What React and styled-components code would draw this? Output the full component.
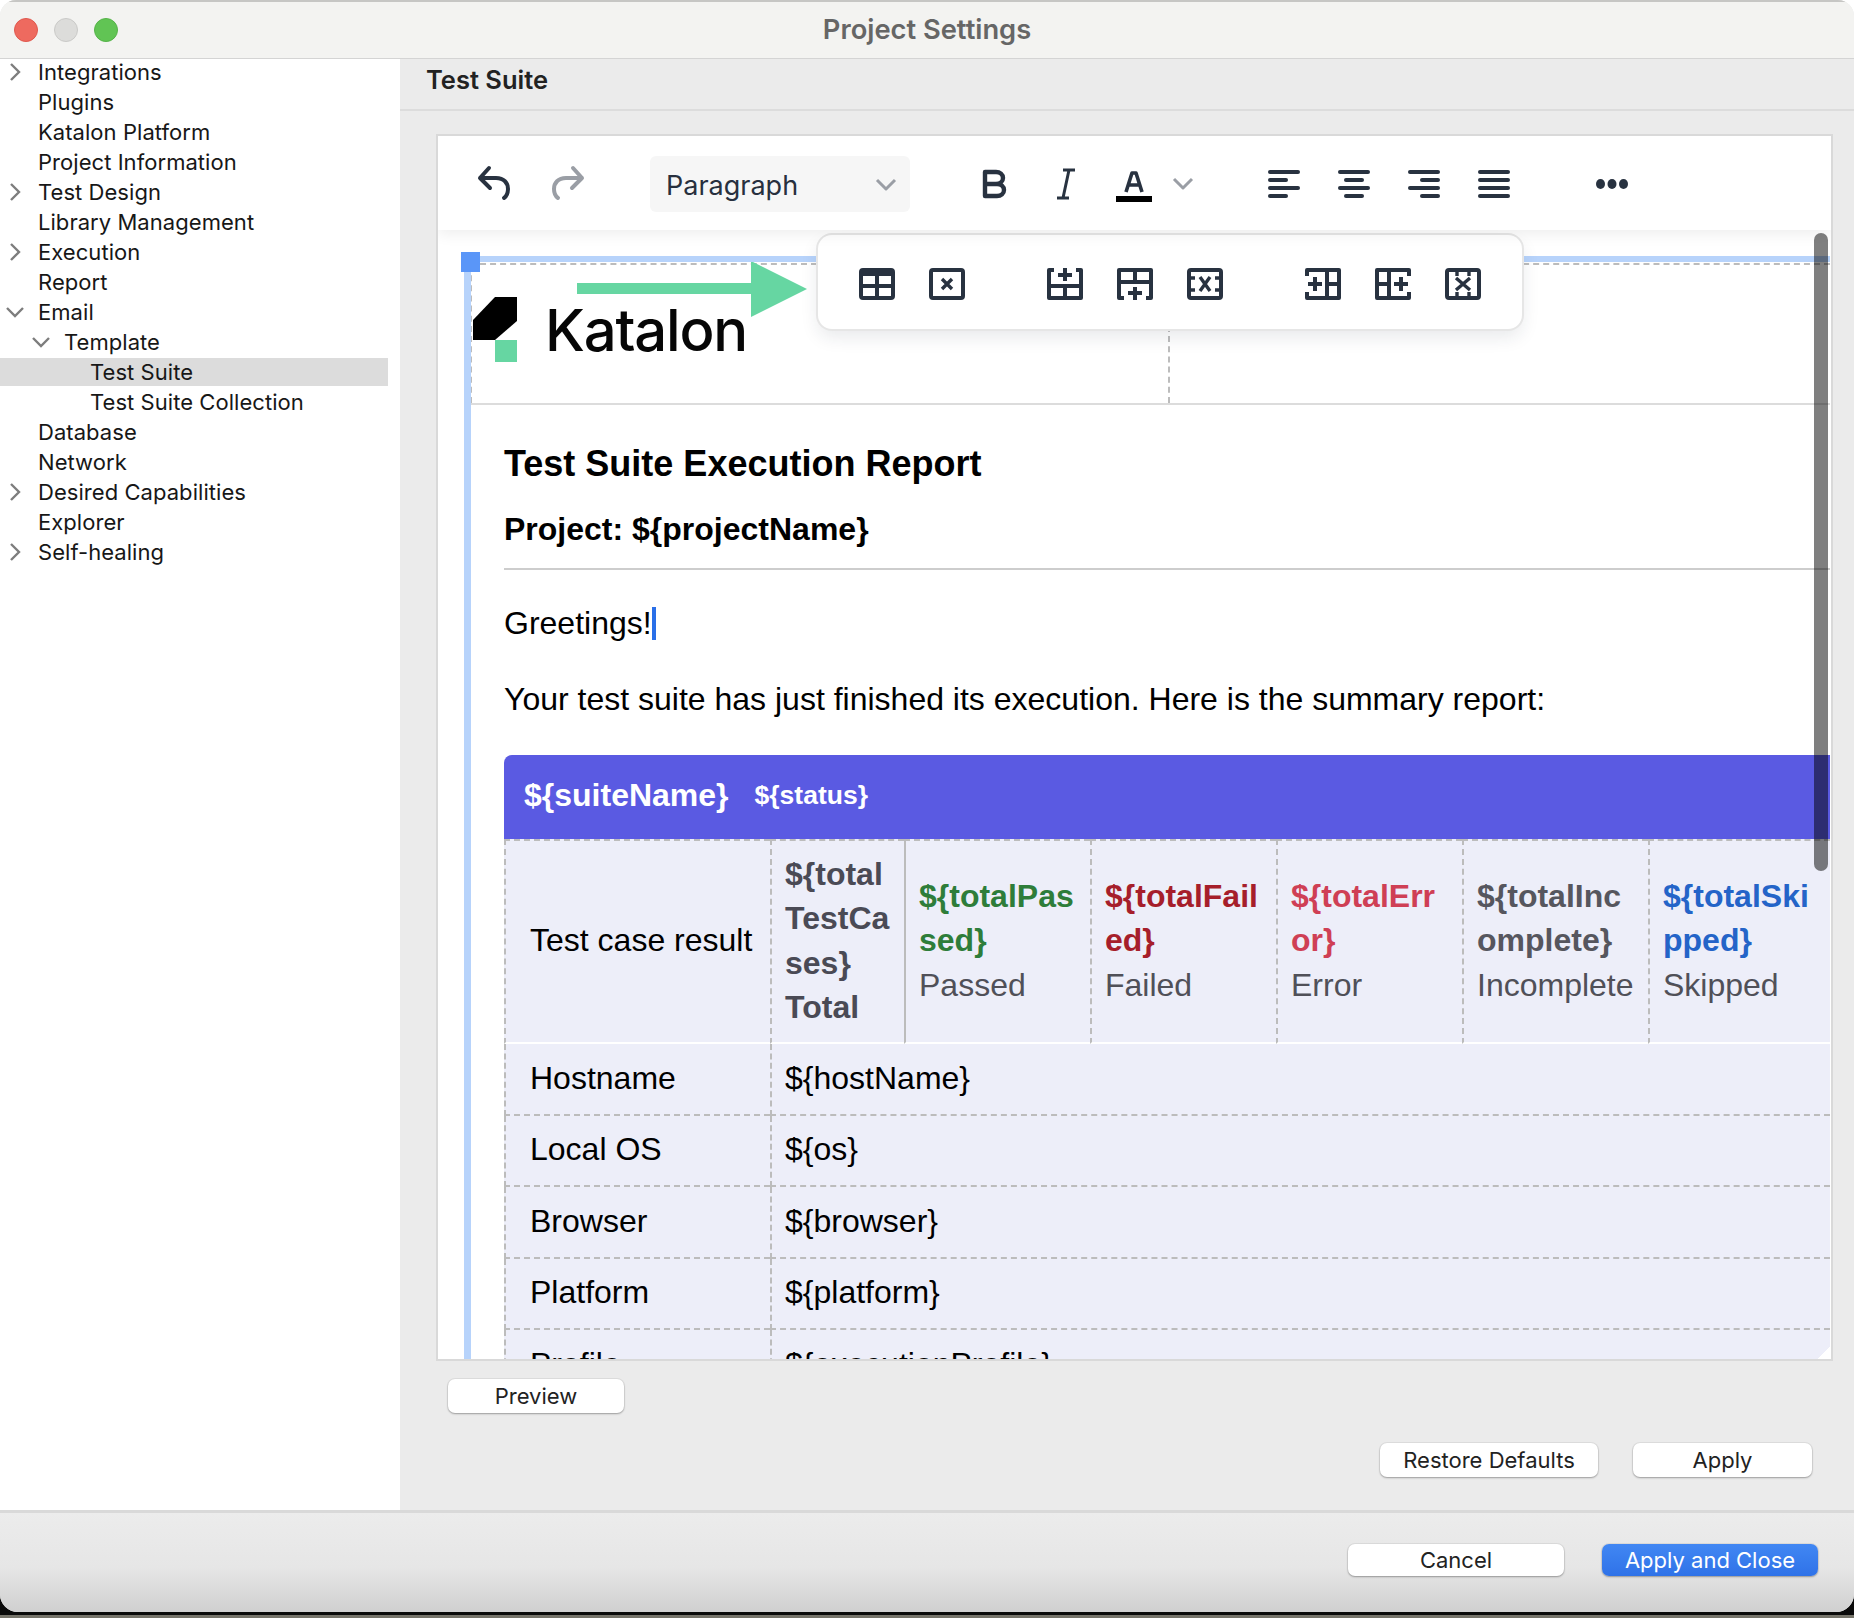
import React from "react";
import styled, { createGlobalStyle } from "styled-components";

const GlobalStyle = createGlobalStyle`
  html, body {
    margin: 0;
    padding: 0;
  }
  #root {
    width: 1854px;
    height: 1618px;
  }
`;

const Page = styled.div`
  width: 1854px;
  height: 1618px;
  overflow: hidden;
  background: linear-gradient(#fff 0, #fff 50%, #0a0a0a 50%, #0a0a0a 1615px, #76746a 1615px);
`;

const Window = styled.div`
  width: 1854px;
  height: 1612px;
  box-sizing: border-box;
  display: flex;
  flex-direction: column;
  overflow: hidden;
  border-radius: 16px 16px 18px 18px;
  background: #ebebeb;
  font-family: Inter, "Liberation Sans", sans-serif;
  color: #1b1b1b;
`;

const TitleBar = styled.div`
  position: relative;
  z-index: 5;
  height: 59px;
  flex: none;
  box-sizing: border-box;
  display: flex;
  align-items: center;
  justify-content: center;
  background: #f3f3f1;
  border-top: 2px solid #c6c6c4;
  border-bottom: 1px solid #d4d4d4;
`;

const Lights = styled.div`
  position: absolute;
  left: 14px;
  top: 16px;
  display: flex;
  gap: 16px;
`;

const Light = styled.span`
  width: 24px;
  height: 24px;
  box-sizing: border-box;
  border-radius: 50%;
  background: ${(p) => p.$color};
  border: 1px solid ${(p) => p.$edge};
`;

const Title = styled.div`
  margin-bottom: 1px;
  font-size: 27.3px;
  font-weight: 600;
  color: #666;
`;

const Body = styled.div`
  flex: 1;
  display: flex;
  min-height: 0;
`;

const Sidebar = styled.div`
  width: 400px;
  flex: none;
  margin-top: -1px;
  padding-right: 12px;
  box-sizing: border-box;
  background: #fff;
  display: flex;
  flex-direction: column;
  gap: 2px;
`;

const TreeRow = styled.div`
  height: 28px;
  flex: none;
  position: relative;
  display: flex;
  align-items: center;
  padding-left: ${(p) => 38 + p.$level * 26}px;
  background: ${(p) => (p.$selected ? "#dcdcdc" : "transparent")};
  font-size: 22px;
  letter-spacing: 0.05px;
  color: #171717;
`;

const Twisty = styled.svg`
  position: absolute;
  left: ${(p) => 5 + p.$level * 26}px;
  top: 4px;
  width: 20px;
  height: 20px;
  fill: none;
  stroke: #7d7d7d;
  stroke-width: 2.4;
`;

const Panel = styled.div`
  flex: 1;
  min-width: 0;
  display: flex;
  flex-direction: column;
`;

const PanelHeader = styled.div`
  height: 52px;
  flex: none;
  box-sizing: border-box;
  padding: 0 0 9px 26px;
  display: flex;
  align-items: center;
  border-bottom: 2px solid #dcdcdc;
  font-size: 25.5px;
  font-weight: 600;
  color: #222;
`;

const EditorBox = styled.div`
  height: 1227px;
  margin: 23px 21px 0 36px;
  box-sizing: border-box;
  border: 2px solid #d9d9d9;
  background: #fff;
  display: flex;
  flex-direction: column;
  overflow: hidden;
`;

const Toolbar = styled.div`
  position: relative;
  z-index: 3;
  height: 94px;
  flex: none;
  display: flex;
  align-items: center;
  padding-top: 2px;
  box-sizing: border-box;
  background: #fff;
  box-shadow: 0 4px 14px rgba(0, 0, 0, 0.07);
`;

const ToolGroup = styled.div`
  display: flex;
  align-items: center;
  gap: ${(p) => p.$gap}px;
  margin-left: ${(p) => p.$left}px;
  margin-bottom: ${(p) => p.$lift || 0}px;
`;

const Icon = styled.svg`
  display: block;
  flex: none;
  fill: none;
  stroke: ${(p) => p.$color || "#283240"};
  stroke-width: ${(p) => p.$weight ?? 4};
  stroke-linecap: ${(p) => p.$cap || "round"};
  stroke-linejoin: round;
  overflow: visible;
`;

const Select = styled.div`
  width: 260px;
  height: 56px;
  box-sizing: border-box;
  padding: 2px 14px 0 16px;
  border-radius: 6px;
  background: #f6f6f6;
  display: flex;
  align-items: center;
  justify-content: space-between;
  font-size: 27px;
  color: #28303e;
`;

const ColorMark = styled.div`
  width: 36px;
  margin-top: 5px;
  display: flex;
  flex-direction: column;
  align-items: center;
  gap: 4px;
  &::after {
    content: "";
    width: 36px;
    height: 6px;
    background: #000;
  }
`;

const EditorArea = styled.div`
  position: relative;
  flex: 1;
  min-height: 0;
  overflow: hidden;
  padding: 33px 1px 0 32px;
`;

const SelectTop = styled.div`
  position: absolute;
  left: 32px;
  right: 1px;
  top: 26px;
  height: 6px;
  background: #b7d3fb;
`;

const SelectLeft = styled.div`
  position: absolute;
  left: 26px;
  top: 26px;
  bottom: 0;
  width: 7px;
  background: #b7d3fb;
`;

const SelectHandle = styled.div`
  position: absolute;
  left: 23px;
  top: 22px;
  width: 19px;
  height: 20px;
  background: #5a96f8;
`;

const LogoRow = styled.div`
  height: 142px;
  box-sizing: border-box;
  display: grid;
  grid-template-columns: 700px 1fr;
  border-top: 2px dashed #bcbcbc;
  border-bottom: 2px solid #dcdcdc;
`;

const LogoCell = styled.div`
  box-sizing: border-box;
  position: relative;
  display: flex;
  align-items: flex-start;
  border-left: 2px dashed #bcbcbc;
  border-right: 2px dashed #bcbcbc;
  padding: 32px 0 0 1px;
`;

const LogoText = styled.div`
  margin: 0 0 0 28px;
  font-size: 58px;
  line-height: 66px;
  font-weight: 500;
  letter-spacing: -1.2px;
  color: #060606;
`;

const Arrow = styled.svg`
  position: absolute;
  left: 105px;
  top: -4px;
  width: 232px;
  height: 56px;
`;

const TableBar = styled.div`
  position: absolute;
  z-index: 2;
  left: 380px;
  top: 5px;
  width: 704px;
  height: 94px;
  box-sizing: border-box;
  padding: 4px 0 0 41px;
  display: flex;
  align-items: center;
  background: #fff;
  border-radius: 14px;
  box-shadow: 0 0 0 2px #e6e6e6, 0 8px 18px rgba(30, 40, 60, 0.1);
`;

const BarGroup = styled.div`
  display: flex;
  gap: 34px;
  margin-right: ${(p) => p.$after}px;
`;

const Content = styled.div`
  padding-left: 34px;
  font-family: "Liberation Sans", Arial, sans-serif;
  color: #000;
`;

const Heading = styled.h1`
  margin: 0;
  padding-top: 38px;
  font-size: 36px;
  line-height: 42px;
  font-weight: 700;
`;

const SubHeading = styled.h2`
  margin: 0;
  padding: 25px 0 20px;
  font-size: 32px;
  line-height: 38px;
  font-weight: 700;
  border-bottom: 2px solid #cdcdcd;
`;

const Para = styled.p`
  margin: 0;
  padding-top: ${(p) => p.$top}px;
  font-size: 32px;
  line-height: 40px;
`;

const Caret = styled.span`
  display: inline-block;
  width: 4px;
  height: 33px;
  vertical-align: -6px;
  background: #2a6fe8;
`;

const ReportHead = styled.div`
  margin-top: 36px;
  height: 84px;
  box-sizing: border-box;
  padding: 0 0 3px 20px;
  display: flex;
  align-items: center;
  gap: 26px;
  background: #5a5ae2;
  border-radius: 8px 0 0 0;
  color: #fff;
  font-weight: 700;
`;

const SuiteName = styled.span`
  font-size: 32px;
`;

const SuiteStatus = styled.span`
  font-size: 26.5px;
`;

const Table = styled.table`
  width: 100%;
  table-layout: fixed;
  border-collapse: separate;
  border-spacing: 0;
  background: #edeef9;
  font-size: 32px;
  line-height: 44.3px;
`;

const Cell = styled.td`
  height: ${(p) => p.$height}px;
  box-sizing: border-box;
  padding: 0 ${(p) => p.$right ?? 13}px 2px ${(p) => p.$pad}px;
  vertical-align: middle;
  overflow-wrap: anywhere;
  border-left: 2px ${(p) => (p.$solid ? "solid" : "dashed")} #bcbcbc;
  border-top: ${(p) => (p.$top ? "2px dashed #bcbcbc" : "none")};
  border-bottom: ${(p) => (p.$white ? "2px solid #fff" : "2px dashed #bcbcbc")};
  color: ${(p) => p.$color || "#000"};
`;

const Stat = styled.b`
  color: ${(p) => p.$color};
`;

const StatLabel = styled.div`
  color: #505058;
`;

const Scrollbar = styled.div`
  position: absolute;
  z-index: 4;
  right: 3px;
  top: 3px;
  width: 14px;
  height: 638px;
  border-radius: 7px;
  background: rgba(0, 0, 0, 0.5);
`;

const ResizeCorner = styled.div`
  position: absolute;
  z-index: 4;
  right: 1px;
  bottom: 0;
  width: 12px;
  height: 12px;
  background: linear-gradient(135deg, transparent 50%, #fff 50%);
`;

const Preview = styled.div`
  margin: 18px 0 0 48px;
`;

const Actions = styled.div`
  display: flex;
  justify-content: flex-end;
  gap: ${(p) => p.$gap}px;
  padding-right: ${(p) => p.$right}px;
  margin-top: ${(p) => p.$top}px;
`;

const Button = styled.button`
  width: ${(p) => p.$width}px;
  height: ${(p) => p.$height || 34}px;
  padding: 0;
  border: none;
  border-radius: 7px;
  font-family: Inter, "Liberation Sans", sans-serif;
  font-size: 22px;
  color: ${(p) => (p.$primary ? "#fff" : "#222")};
  background: ${(p) => (p.$primary ? "linear-gradient(#4187f3, #2f72e8)" : "#fff")};
  box-shadow: 0 0 0 1px rgba(0, 0, 0, 0.05), 0 1px 2px rgba(0, 0, 0, 0.3);
`;

const Footer = styled.div`
  height: 102px;
  flex: none;
  box-sizing: border-box;
  padding-top: 31px;
  border-top: 3px solid #d9d9d9;
  background: linear-gradient(#ececec 0, #e6e6e6 55%, #d0d0d0 100%);
`;

const tree = [
  { label: "Integrations", level: 0, twisty: "closed" },
  { label: "Plugins", level: 0 },
  { label: "Katalon Platform", level: 0 },
  { label: "Project Information", level: 0 },
  { label: "Test Design", level: 0, twisty: "closed" },
  { label: "Library Management", level: 0 },
  { label: "Execution", level: 0, twisty: "closed" },
  { label: "Report", level: 0 },
  { label: "Email", level: 0, twisty: "open" },
  { label: "Template", level: 1, twisty: "open" },
  { label: "Test Suite", level: 2, selected: true },
  { label: "Test Suite Collection", level: 2 },
  { label: "Database", level: 0 },
  { label: "Network", level: 0 },
  { label: "Desired Capabilities", level: 0, twisty: "closed" },
  { label: "Explorer", level: 0 },
  { label: "Self-healing", level: 0, twisty: "closed" },
];

const stats = [
  { value: "${totalPassed}", label: "Passed", color: "#2e7d3a", solid: true },
  { value: "${totalFailed}", label: "Failed", color: "#a61e2b" },
  { value: "${totalError}", label: "Error", color: "#cf3f55" },
  { value: "${totalIncomplete}", label: "Incomplete", color: "#56565e" },
  { value: "${totalSkipped}", label: "Skipped", color: "#2464c8" },
];

const details = [
  ["Hostname", "${hostName}"],
  ["Local OS", "${os}"],
  ["Browser", "${browser}"],
  ["Platform", "${platform}"],
  ["Profile", "${executionProfile}"],
];

const Chevron = ({ color = "#9a9ea5" }) => (
  <Icon width="20" height="12" viewBox="0 0 20 12" $color={color} $weight={3} $cap="butt">
    <path d="M1 1l9 9 9-9" />
  </Icon>
);

const Bars = ({ rows }) => (
  <Icon width="32" height="28" viewBox="0 0 32 28" $weight={4}>
    {rows.map(([a, b], i) => (
      <path key={i} d={`M${a} ${2 + i * 8}H${b}`} />
    ))}
  </Icon>
);

// table toolbar glyphs, all on a 36x32 grid
const tableIcons = {
  table: (
    <>
      <rect x="2" y="2" width="32" height="28" rx="2" />
      <path d="M2 6h32M18 6v24M2 18h32" />
    </>
  ),
  remove: (
    <>
      <rect x="2" y="2" width="32" height="28" rx="2" />
      <path d="M13 11l10 10M23 11L13 21" strokeWidth="3.4" />
    </>
  ),
  rowAbove: (
    <path d="M7 2H2v28h32V2h-5M2 18h32M18 18v12M18 0v13M11 7h14" />
  ),
  rowBelow: (
    <path d="M7 30H2V2h32v28h-5M2 14h32M18 2v12M18 19v13M11 25h14" />
  ),
  rowRemove: (
    <>
      <rect x="2" y="2" width="32" height="28" rx="2" />
      <path d="M2 10h6M2 22h6M28 10h6M28 22h6M13 9l10 14M23 9L13 23" strokeWidth="3.4" />
    </>
  ),
  colBefore: (
    <path d="M2 8V2h32v28H2v-6M22 2v28M22 16h12M3 16h14M10 9v14" />
  ),
  colAfter: (
    <path d="M34 8V2H2v28h32v-6M14 2v28M2 16h12M19 16h14M26 9v14" />
  ),
  colRemove: (
    <>
      <rect x="2" y="2" width="32" height="28" rx="2" />
      <path d="M12 2v6M24 2v6M12 24v6M24 24v6M11 10l14 12M25 10L11 22" strokeWidth="3.4" />
    </>
  ),
};

const TableIcon = ({ name }) => (
  <Icon width="36" height="32" viewBox="0 0 36 32" $cap="butt">
    {tableIcons[name]}
  </Icon>
);

export default function App() {
  return (
    <Page>
      <GlobalStyle />
      <Window>
        <TitleBar>
          <Lights>
            <Light $color="#ee6a5f" $edge="#e0584e" />
            <Light $color="#dcdcda" $edge="#cacac8" />
            <Light $color="#61c454" $edge="#55b349" />
          </Lights>
          <Title>Project Settings</Title>
        </TitleBar>
        <Body>
          <Sidebar>
            {tree.map((item) => (
              <TreeRow key={item.label} $level={item.level} $selected={item.selected}>
                {item.twisty && (
                  <Twisty viewBox="0 0 20 20" $level={item.level}>
                    <path d={item.twisty === "open" ? "M2 6l8 8 8-8" : "M6 2l8 8-8 8"} />
                  </Twisty>
                )}
                {item.label}
              </TreeRow>
            ))}
          </Sidebar>
          <Panel>
            <PanelHeader>Test Suite</PanelHeader>
            <EditorBox>
              <Toolbar>
                <ToolGroup $gap={42} $left={40} $lift={2}>
                  <Icon width="32" height="34" viewBox="0 0 32 34">
                    <path d="M11 2L2 12l10 10M2 12h16c8 0 12 5 12 11 0 4-1 7-4 9" />
                  </Icon>
                  <Icon width="32" height="34" viewBox="0 0 32 34" $color="#9a9ea5">
                    <path d="M21 2l9 10-10 10M30 12H14C6 12 2 17 2 23c0 4 1 7 4 9" />
                  </Icon>
                </ToolGroup>
                <ToolGroup $gap={0} $left={66}>
                  <Select>
                    Paragraph
                    <Chevron />
                  </Select>
                </ToolGroup>
                <ToolGroup $gap={50} $left={73}>
                  <Icon width="23" height="28" viewBox="0 0 23 28" $weight={4.4}>
                    <path d="M2 2h11c4 0 7 2.500 7 6s-3 6-7 6H2zM2 14h12c4 0 7 2.500 7 6s-3 6-7 6H2z" />
                  </Icon>
                  <Icon width="20" height="30" viewBox="0 0 20 30" $weight={3} $cap="butt">
                    <path d="M7 1h12M1 29h12M13 1L7 29" />
                  </Icon>
                </ToolGroup>
                <ToolGroup $gap={21} $left={40}>
                  <ColorMark>
                    <Icon width="20" height="21" viewBox="0 0 20 21" $weight={3.6} $cap="butt">
                      <path d="M2 21L8 2h4l6 19M5 14h10" />
                    </Icon>
                  </ColorMark>
                  <Chevron />
                </ToolGroup>
                <ToolGroup $gap={38} $left={75}>
                  <Bars rows={[[2, 30], [2, 18], [2, 30], [2, 18]]} />
                  <Bars rows={[[2, 30], [8, 24], [2, 30], [8, 24]]} />
                  <Bars rows={[[2, 30], [14, 30], [2, 30], [14, 30]]} />
                  <Bars rows={[[2, 30], [2, 30], [2, 30], [2, 30]]} />
                </ToolGroup>
                <ToolGroup $gap={0} $left={86}>
                  <Icon width="32" height="10" viewBox="0 0 32 10" $weight={0}>
                    <ellipse cx="4.500" cy="5" rx="4.500" ry="5" fill="#283240" />
                    <ellipse cx="16" cy="5" rx="4.500" ry="5" fill="#283240" />
                    <ellipse cx="27.500" cy="5" rx="4.500" ry="5" fill="#283240" />
                  </Icon>
                </ToolGroup>
              </Toolbar>
              <EditorArea>
                <LogoRow>
                  <LogoCell>
                    <Icon width="44" height="65" viewBox="0 0 44 65" $weight={0}>
                      <path d="M22 0h22v24L22 43H0V23z" fill="#000" />
                      <path d="M22 43h22v22H22z" fill="#66d6a2" />
                    </Icon>
                    <LogoText>Katalon</LogoText>
                    <Arrow viewBox="0 0 232 56">
                      <path d="M0 22h174V0l56 28-56 28V33H0z" fill="#66d6a2" />
                    </Arrow>
                  </LogoCell>
                  <div />
                </LogoRow>
                <Content>
                  <Heading>Test Suite Execution Report</Heading>
                  <SubHeading>Project: {"${projectName}"}</SubHeading>
                  <Para $top={33}>
                    Greetings!
                    <Caret />
                  </Para>
                  <Para $top={36}>
                    Your test suite has just finished its execution. Here is the summary report:
                  </Para>
                  <ReportHead>
                    <SuiteName>{"${suiteName}"}</SuiteName>
                    <SuiteStatus>{"${status}"}</SuiteStatus>
                  </ReportHead>
                  <Table>
                    <colgroup>
                      <col style={{ width: 266 }} />
                      <col style={{ width: 134 }} />
                      <col style={{ width: 186 }} />
                      <col style={{ width: 186 }} />
                      <col style={{ width: 186 }} />
                      <col style={{ width: 186 }} />
                      <col />
                    </colgroup>
                    <tbody>
                      <tr>
                        <Cell $height={205} $pad={24} $right={0} $white $top>
                          Test case result
                        </Cell>
                        <Cell $height={205} $pad={13} $right={6} $white $top $color="#4a4a55">
                          <b>{"${total TestCases}"}</b>
                          <div>
                            <b>Total</b>
                          </div>
                        </Cell>
                        {stats.map((s) => (
                          <Cell key={s.label} $height={205} $pad={13} $right={13} $white $top $solid={s.solid}>
                            <Stat $color={s.color}>{s.value}</Stat>
                            <StatLabel>{s.label}</StatLabel>
                          </Cell>
                        ))}
                      </tr>
                      {details.map(([name, value]) => (
                        <tr key={name}>
                          <Cell $height={71.5} $pad={24}>
                            {name}
                          </Cell>
                          <Cell $height={71.5} $pad={13} colSpan={6}>
                            {value}
                          </Cell>
                        </tr>
                      ))}
                    </tbody>
                  </Table>
                </Content>
                <SelectTop />
                <SelectLeft />
                <SelectHandle />
                <TableBar>
                  <BarGroup $after={82}>
                    <TableIcon name="table" />
                    <TableIcon name="remove" />
                  </BarGroup>
                  <BarGroup $after={82}>
                    <TableIcon name="rowAbove" />
                    <TableIcon name="rowBelow" />
                    <TableIcon name="rowRemove" />
                  </BarGroup>
                  <BarGroup $after={0}>
                    <TableIcon name="colBefore" />
                    <TableIcon name="colAfter" />
                    <TableIcon name="colRemove" />
                  </BarGroup>
                </TableBar>
                <Scrollbar />
                <ResizeCorner />
              </EditorArea>
            </EditorBox>
            <Preview>
              <Button $width={176}>Preview</Button>
            </Preview>
            <Actions $gap={35} $right={42} $top={30}>
              <Button $width={218}>Restore Defaults</Button>
              <Button $width={179}>Apply</Button>
            </Actions>
          </Panel>
        </Body>
        <Footer>
          <Actions $gap={38} $right={36} $top={0}>
            <Button $width={216} $height={32}>
              Cancel
            </Button>
            <Button $width={216} $height={32} $primary>
              Apply and Close
            </Button>
          </Actions>
        </Footer>
      </Window>
    </Page>
  );
}
